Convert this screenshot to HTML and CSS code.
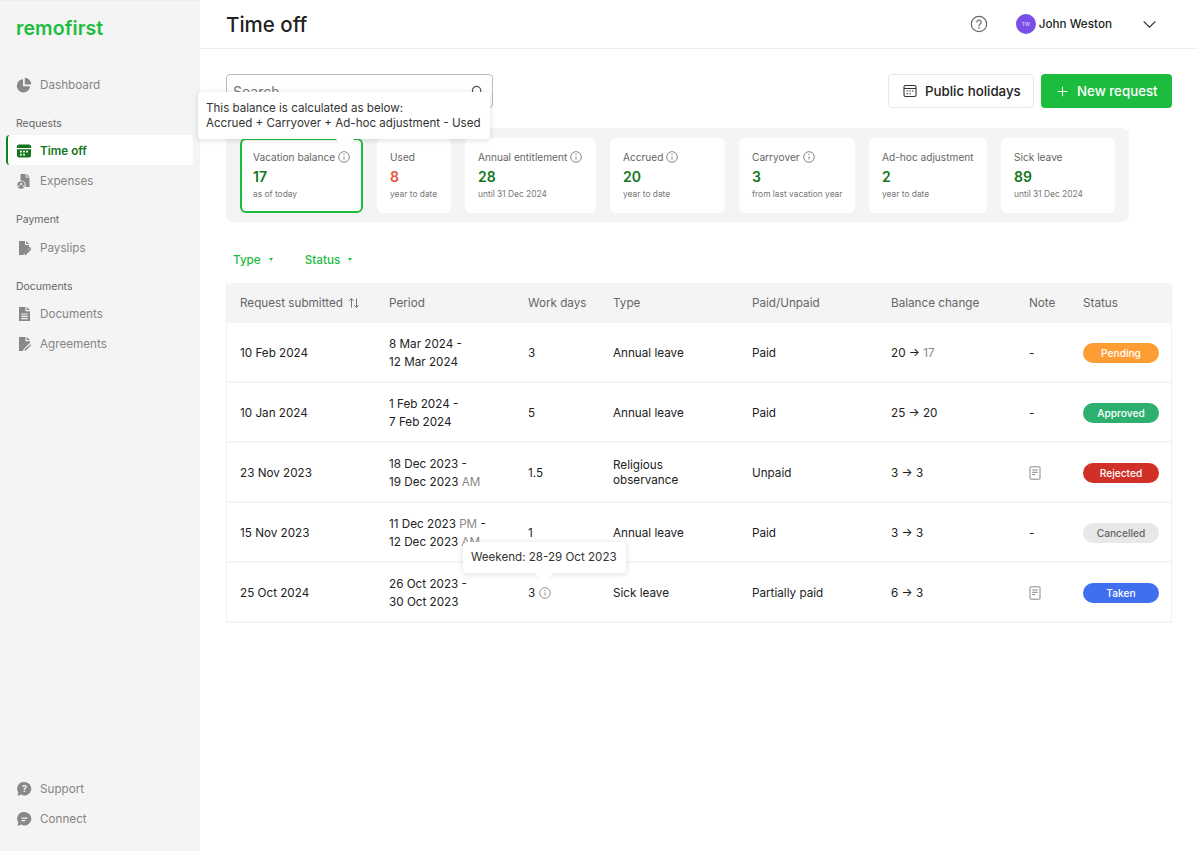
FILE: index.html
```html
<!DOCTYPE html>
<html lang="en">
<head>
<meta charset="utf-8">
<title>Time off</title>
<link rel="stylesheet" href="styles.css">
</head>
<body>
<div class="app">
  <aside class="sidebar">
    <div class="side-top">
      <div class="logo">remofirst</div>
      <a class="nav-item"><svg class="nav-icon" viewBox="0 0 16 16"><path d="M7 2.200v7h7A6.600 6.600 0 1 1 7 2.200z"/><path d="M8.800 .8A6.600 6.600 0 0 1 15.200 7.400H8.800z"/></svg>Dashboard</a>
      <div class="group">
        <div class="group-label">Requests</div>
        <a class="nav-item active"><svg class="nav-icon" viewBox="0 0 16 16"><path fill-rule="evenodd" d="M3 1.500h10A2 2 0 0 1 15 3.500V5H1V3.500A2 2 0 0 1 3 1.500zM1 6.200h14V12.500a2 2 0 0 1-2 2H3a2 2 0 0 1-2-2zM4 7.800v1.700h1.800V7.800zM7.100 7.800v1.700h1.800V7.800zM10.200 7.800v1.700H12V7.800zM4 10.700v1.700h1.800v-1.700zM7.100 10.700v1.700h1.800v-1.700z"/></svg>Time off</a>
        <a class="nav-item"><svg class="nav-icon" viewBox="0 0 16 16"><path d="M4.500 1h5.200v3.600h3.800V14H9.600a5 5 0 0 0-5.100-6.600z"/><path d="M10.700 1l2.800 2.700h-2.800z"/><path fill-rule="evenodd" d="M5 8.300a3.700 3.700 0 1 1 0 7.400 3.700 3.700 0 0 1 0-7.400zM5 10a1.100 1.100 0 1 0 0 2.200A1.100 1.100 0 0 0 5 10zM2.800 12.300a.8.800 0 1 0 0 1.600.8.800 0 0 0 0-1.600zM7.200 12.300a.8.800 0 1 0 0 1.600.8.800 0 0 0 0-1.600z"/></svg>Expenses</a>
      </div>
      <div class="group group-pay">
        <div class="group-label">Payment</div>
        <a class="nav-item"><svg class="nav-icon" viewBox="0 0 16 16"><path d="M3 1h6v4h4v2.800L7.700 13v2H3z"/><path d="M10.200 1l3 3h-3z"/><path fill="none" stroke="#888" stroke-width="1.400" stroke-linecap="round" d="M9.300 14.500l4.700-4.700a1.200 1.200 0 0 0-1.700-1.700L8.400 12a.8.800 0 0 0 1.100 1.100l3-3"/></svg>Payslips</a>
      </div>
      <div class="group">
        <div class="group-label">Documents</div>
        <a class="nav-item"><svg class="nav-icon" viewBox="0 0 16 16"><path fill-rule="evenodd" d="M3 1h6.500v4.200H14V15H3zM5.200 7.500v1.100h6.600V7.500zM5.200 9.800v1.100h6.600V9.800zM5.200 12.100v1.100h6.600v-1.100z"/><path d="M10.700 1L14 4h-3.300z"/></svg>Documents</a>
        <a class="nav-item"><svg class="nav-icon" viewBox="0 0 16 16"><path d="M3 1h6.500v4.200H14v1.500L8 12.700 6.800 15H3z"/><path d="M10.700 1L14 4h-3.300z"/><path d="M14.600 8.200l.8.800-5.500 5.600H8.300l.2-1z"/></svg>Agreements</a>
      </div>
    </div>
    <div class="side-bottom">
      <a class="nav-item"><svg class="nav-icon" viewBox="0 0 16 16"><path d="M8.500 1a6.700 6.700 0 1 1-3.300 12.500L1.500 15l.8-3.600A6.700 6.700 0 0 1 8.500 1z"/><text x="8.500" y="10.800" class="glyph">?</text></svg>Support</a>
      <a class="nav-item"><svg class="nav-icon" viewBox="0 0 16 16"><path fill-rule="evenodd" d="M8.500 1a6.700 6.700 0 1 1-3.300 12.500L1.500 15l.8-3.600A6.700 6.700 0 0 1 8.500 1zM5.500 6.500v1.300h6V6.500zM5.500 9v1.300h3.800V9z"/></svg>Connect</a>
    </div>
  </aside>

  <div class="content">
    <header class="topbar">
      <h1 class="page-title">Time off</h1>
      <div class="user-area">
        <svg class="help-icon" viewBox="0 0 18 18"><circle cx="9" cy="9" r="7.700"/><path d="M6.900 7.100a2.100 2.100 0 1 1 3.300 1.800c-.8.500-1.200.9-1.200 1.800"/><circle class="dot" cx="9" cy="12.900" r=".8"/></svg>
        <div class="user">
          <span class="avatar">TW</span>
          <span class="user-name">John Weston</span>
        </div>
        <svg class="chev" viewBox="0 0 16 10"><path d="M1.500 1.500L8 8l6.500-6.500"/></svg>
      </div>
    </header>

    <main class="main">
      <div class="toolbar">
        <div class="search">
          <span class="search-text">Search</span>
          <svg class="search-icon" viewBox="0 0 14 14"><circle cx="6" cy="6" r="4.500"/><path d="M9.500 9.500L13 13"/></svg>
        </div>
        <div class="actions">
          <button class="btn btn-outline"><svg class="btn-cal" viewBox="0 0 14 14"><rect x="1" y="1.500" width="12" height="11" rx="1.500"/><path d="M1 4.500h12M3.500 7h1.500M6.300 7h1.500M9 7h1.500M3.500 9.700h1.500M6.300 9.700h1.500"/></svg>Public holidays</button>
          <button class="btn btn-primary"><svg class="btn-plus" viewBox="0 0 12 12"><path d="M6 .8v10.400M.8 6h10.400"/></svg>New request</button>
        </div>
      </div>

      <section class="stats">
        <div class="card card-first">
          <div class="card-title">Vacation balance <svg class="info" viewBox="0 0 12 12"><circle cx="6" cy="6" r="5.300"/><path d="M6 5.300v3.300"/><circle class="dot" cx="6" cy="3.400" r=".6"/></svg></div>
          <div class="card-value">17</div>
          <div class="card-sub">as of today</div>
          <div class="tooltip tooltip-balance">This balance is calculated as below:<br>Accrued + Carryover + Ad-hoc adjustment - Used</div>
        </div>
        <div class="card card-used">
          <div class="card-title">Used</div>
          <div class="card-value value-red">8</div>
          <div class="card-sub">year to date</div>
        </div>
        <div class="card card-annual">
          <div class="card-title">Annual entitlement <svg class="info" viewBox="0 0 12 12"><circle cx="6" cy="6" r="5.300"/><path d="M6 5.300v3.300"/><circle class="dot" cx="6" cy="3.400" r=".6"/></svg></div>
          <div class="card-value">28</div>
          <div class="card-sub">until 31 Dec 2024</div>
        </div>
        <div class="card card-accrued">
          <div class="card-title">Accrued <svg class="info" viewBox="0 0 12 12"><circle cx="6" cy="6" r="5.300"/><path d="M6 5.300v3.300"/><circle class="dot" cx="6" cy="3.400" r=".6"/></svg></div>
          <div class="card-value">20</div>
          <div class="card-sub">year to date</div>
        </div>
        <div class="card card-carry">
          <div class="card-title">Carryover <svg class="info" viewBox="0 0 12 12"><circle cx="6" cy="6" r="5.300"/><path d="M6 5.300v3.300"/><circle class="dot" cx="6" cy="3.400" r=".6"/></svg></div>
          <div class="card-value">3</div>
          <div class="card-sub">from last vacation year</div>
        </div>
        <div class="card card-adhoc">
          <div class="card-title">Ad-hoc adjustment</div>
          <div class="card-value">2</div>
          <div class="card-sub">year to date</div>
        </div>
        <div class="card card-sick">
          <div class="card-title">Sick leave</div>
          <div class="card-value">89</div>
          <div class="card-sub">until 31 Dec 2024</div>
        </div>
      </section>

      <div class="filters">
        <span class="filter">Type<i class="caret"></i></span>
        <span class="filter">Status<i class="caret"></i></span>
      </div>

      <table class="requests">
        <colgroup>
          <col class="c1"><col class="c2"><col class="c3"><col class="c4"><col class="c5"><col class="c6"><col class="c7"><col class="c8">
        </colgroup>
        <thead>
          <tr>
            <th>Request submitted <svg class="sort" viewBox="0 0 12 12"><path d="M3.500 10.500v-9M1.200 3.800l2.300-2.300 2.300 2.300M8.500 1.500v9M6.200 8.200l2.300 2.300 2.300-2.300"/></svg></th>
            <th>Period</th><th>Work days</th><th>Type</th><th>Paid/Unpaid</th><th>Balance change</th><th>Note</th><th>Status</th>
          </tr>
        </thead>
        <tbody>
          <tr>
            <td>10 Feb 2024</td>
            <td class="period">8 Mar 2024 -<br>12 Mar 2024</td>
            <td>3</td><td>Annual leave</td><td>Paid</td>
            <td>20 → <span class="muted">17</span></td>
            <td>-</td>
            <td><span class="badge pending">Pending</span></td>
          </tr>
          <tr>
            <td>10 Jan 2024</td>
            <td class="period">1 Feb 2024 -<br>7 Feb 2024</td>
            <td>5</td><td>Annual leave</td><td>Paid</td>
            <td>25 → 20</td>
            <td>-</td>
            <td><span class="badge approved">Approved</span></td>
          </tr>
          <tr>
            <td>23 Nov 2023</td>
            <td class="period">18 Dec 2023 -<br>19 Dec 2023 <span class="muted">AM</span></td>
            <td>1.5</td><td class="tight">Religious observance</td><td>Unpaid</td>
            <td>3 → 3</td>
            <td><svg class="note" viewBox="0 0 12 14"><rect x="1" y=".8" width="10" height="12.400" rx="1"/><path d="M3.200 4h5.600M3.200 6.300h5.600M3.200 8.600h3"/></svg></td>
            <td><span class="badge rejected">Rejected</span></td>
          </tr>
          <tr>
            <td>15 Nov 2023</td>
            <td class="period">11 Dec 2023 <span class="muted">PM</span> -<br>12 Dec 2023 <span class="muted">AM</span></td>
            <td>1</td><td>Annual leave</td><td>Paid</td>
            <td>3 → 3</td>
            <td>-</td>
            <td><span class="badge cancelled">Cancelled</span></td>
          </tr>
          <tr>
            <td>25 Oct 2024</td>
            <td class="period">26 Oct 2023 -<br>30 Oct 2023</td>
            <td class="days"><span class="days-wrap">3 <svg class="info info-row" viewBox="0 0 12 12"><circle cx="6" cy="6" r="5.300"/><path d="M6 5.300v3.300"/><circle class="dot" cx="6" cy="3.400" r=".6"/></svg><span class="tooltip tooltip-weekend">Weekend: 28-29 Oct 2023</span></span></td>
            <td>Sick leave</td><td>Partially paid</td>
            <td>6 → 3</td>
            <td><svg class="note" viewBox="0 0 12 14"><rect x="1" y=".8" width="10" height="12.400" rx="1"/><path d="M3.200 4h5.600M3.200 6.300h5.600M3.200 8.600h3"/></svg></td>
            <td><span class="badge taken">Taken</span></td>
          </tr>
        </tbody>
      </table>
    </main>
  </div>
</div>
</body>
</html>
```
FILE: styles.css
```css
* { box-sizing: border-box; }
html, body { margin: 0; height: 100%; }
body {
  font-family: Inter, "Noto Sans", sans-serif;
  font-size: 11.700px;
  color: #222;
  background: #fff;
  overflow: hidden;
}
.app { display: flex; height: 851px; }

/* Sidebar */
.sidebar {
  width: 200px;
  flex: none;
  background: #f4f4f4;
  border-top: 1px solid #eceef6;
  padding: 0 6px 18px;
  display: flex;
  flex-direction: column;
  justify-content: space-between;
}
.logo {
  height: 68px;
  padding: 16px 0 0 10px;
  font-size: 19.500px;
  line-height: 23px;
  font-weight: 600;
  color: #1cbd3f;
  letter-spacing: .1px;
}
.nav-item {
  display: flex;
  align-items: center;
  gap: 8px;
  height: 30px;
  width: 187px;
  padding: 2px 0 0 10px;
  color: #848484;
  font-size: 11.700px;
}
.nav-icon { width: 16px; height: 16px; fill: #888; flex: none; }
.nav-item.active {
  background: #fff;
  border-radius: 4px;
  border-left: 2px solid #12801f;
  padding-left: 8px;
  color: #12761d;
  font-weight: 600;
}
.nav-item.active .nav-icon { fill: #12761d; }
.glyph { font-size: 9px; font-weight: 700; fill: #f4f4f4; text-anchor: middle; }
.group { margin-top: 16px; }
.group-label {
  height: 16px;
  line-height: 18px;
  margin-bottom: 4px;
  padding-left: 10px;
  font-size: 10.500px;
  color: #666;
}
.group-pay .group-label { margin-bottom: 5px; }

/* Topbar */
.content { flex: 1; min-width: 0; }
.topbar {
  height: 49px;
  border-bottom: 1px solid #eee;
  padding: 0 41px 0 26px;
  display: flex;
  align-items: center;
  justify-content: space-between;
}
.page-title { margin: 0; font-size: 20.500px; font-weight: 500; color: #222; }
.user-area { display: flex; align-items: center; }
.help-icon { width: 18px; height: 18px; fill: none; stroke: #666; stroke-width: 1.200; stroke-linecap: round; margin-right: 28px; }
.help-icon .dot { fill: #666; stroke: none; }
.user { display: flex; align-items: center; gap: 3px; }
.avatar {
  width: 20px; height: 20px;
  border-radius: 50%;
  background: #7a4fe8;
  color: #e8e0ff;
  font-size: 5px;
  display: flex; align-items: center; justify-content: center;
}
.user-name { font-size: 11.700px; font-weight: 500; color: #222; }
.chev { width: 15px; height: 9px; fill: none; stroke: #2c2c44; stroke-width: 1.300; margin-left: 30px; }

/* Main */
.main { padding: 25px 26px 0; }
.toolbar { display: flex; justify-content: space-between; align-items: flex-start; }
.search {
  width: 267px; height: 34px;
  border: 1px solid #bdbdbd;
  border-radius: 4px;
  display: flex; align-items: center; justify-content: space-between;
  padding: 0 8px 0 6px;
}
.search-text { color: #777; font-size: 14px; }
.search-icon { width: 13px; height: 13px; fill: none; stroke: #555; stroke-width: 1.300; }
.actions { display: flex; gap: 7px; }
.btn {
  height: 34px;
  border-radius: 4px;
  font-family: inherit;
  font-size: 13.300px;
  display: flex; align-items: center;
}
.btn-outline {
  width: 146px;
  background: #fff;
  border: 1px solid #e6e6e6;
  color: #222;
  font-weight: 500;
  padding: 0 0 0 14px;
  gap: 8px;
}
.btn-cal { width: 14px; height: 14px; fill: none; stroke: #333; stroke-width: 1.100; }
.btn-primary {
  width: 131px;
  background: #1cbd3f;
  border: 0;
  color: #fff;
  padding: 0 0 0 16px;
  gap: 9px;
  font-weight: 500;
}
.btn-plus { width: 11px; height: 11px; fill: none; stroke: #fff; stroke-width: 1.200; }

/* Stats */
.stats {
  width: 903px;
  height: 94px;
  margin-top: 20px;
  background: #f4f4f4;
  border-radius: 7px;
  padding: 10px 14px 0;
  display: flex;
  gap: 14px;
  align-items: flex-start;
}
.card {
  height: 75px;
  background: #fff;
  border-radius: 6px;
  padding: 12px 0 0 13px;
  position: relative;
  flex: none;
}
.card-first { width: 123px; border: 2px solid #1cbd3f; padding: 10px 0 0 11px; }
.card-used { width: 74px; }
.card-annual { width: 131px; }
.card-accrued { width: 115px; }
.card-carry { width: 116px; }
.card-adhoc { width: 118px; }
.card-sick { width: 114px; }
.card-title {
  height: 14px;
  display: flex; align-items: center; gap: 3px;
  font-size: 10.150px;
  color: #666;
}
.card-value {
  margin-top: 3px;
  height: 19px;
  line-height: 19px;
  font-size: 14px;
  font-weight: 600;
  color: #12761d;
}
.value-red { color: #e8553a; }
.card-sub { margin-top: 2px; font-size: 8.400px; line-height: 12px; color: #777; }
.info { width: 12px; height: 12px; fill: none; stroke: #777; stroke-width: .9; flex: none; }
.info .dot { fill: #777; stroke: none; }

/* Tooltips */
.tooltip {
  position: absolute;
  background: #fff;
  border-radius: 4px;
  box-shadow: 0 1px 6px rgba(0,0,0,.14);
  color: #333;
  font-size: 11.600px;
  z-index: 5;
  white-space: nowrap;
}
.tooltip::after {
  content: "";
  position: absolute;
  top: 100%;
  width: 0; height: 0;
  border-left: 9px solid transparent;
  border-right: 9px solid transparent;
  border-top: 10px solid #fff;
}
.tooltip-balance {
  left: -44px; top: -48px;
  width: 292px; height: 47px;
  padding: 9px 8px 0;
  line-height: 15px;
}
.tooltip-balance::after { left: 138px; }
.tooltip-weekend {
  left: -65px; top: -44px;
  width: 163px; height: 31px;
  padding: 0 8px;
  line-height: 31px;
  font-weight: 400;
}
.tooltip-weekend::after { left: 72px; }

/* Filters */
.filters {
  height: 61px;
  padding: 14px 7px 0;
  display: flex; gap: 32px; align-items: center;
}
.filter {
  color: #1cbd3f;
  font-weight: 500;
  font-size: 11.700px;
  display: flex; align-items: center; gap: 8px;
}
.caret {
  width: 0; height: 0;
  border-left: 2.500px solid transparent;
  border-right: 2.500px solid transparent;
  border-top: 3px solid #1cbd3f;
}

/* Table */
.requests {
  width: 946px;
  table-layout: fixed;
  border-collapse: separate;
  border-spacing: 0;
  border-right: 1px solid #f0f0f0;
  border-left: 1px solid #f0f0f0;
}
.c1 { width: 148px; } .c2 { width: 139px; } .c3 { width: 85px; } .c4 { width: 139px; }
.c5 { width: 139px; } .c6 { width: 138px; } .c7 { width: 54px; } .c8 { width: 102px; }
.requests th {
  height: 40px;
  padding: 0 0 0 14px;
  background: #f4f4f4;
  text-align: left;
  font-weight: 400;
  color: #666;
  font-size: 11.700px;
}
.requests th:first-child { border-top-left-radius: 5px; }
.requests th:last-child { border-top-right-radius: 5px; }
.requests td {
  height: 60px;
  padding: 2px 0 0 14px;
  border-bottom: 2px solid #f4f4f4;
  color: #222;
  font-size: 11.700px;
}
.requests td:first-child, .requests th:first-child { padding-left: 13px; }
.period { line-height: 18px; }
.requests td.tight { line-height: 15px; padding-right: 24px; }
.muted { color: #888; }
.sort { width: 12px; height: 12px; margin-left: 2px; fill: none; stroke: #777; stroke-width: 1; vertical-align: -2px; }
.note { width: 12px; height: 14px; fill: none; stroke: #888; stroke-width: 1; display: block; }
.days-wrap { position: relative; display: inline-flex; align-items: center; gap: 4px; }
.info-row { stroke: #888; }
.badge {
  display: block;
  width: 76px; height: 20px;
  border-radius: 10px;
  text-align: center;
  line-height: 20px;
  font-size: 10.200px;
  font-weight: 500;
  color: #fff;
}
.pending { background: #ff9d35; }
.approved { background: #2caf6f; }
.rejected { background: #d03027; }
.cancelled { background: #e8e8e8; color: #666; }
.taken { background: #3f6fee; }
```
